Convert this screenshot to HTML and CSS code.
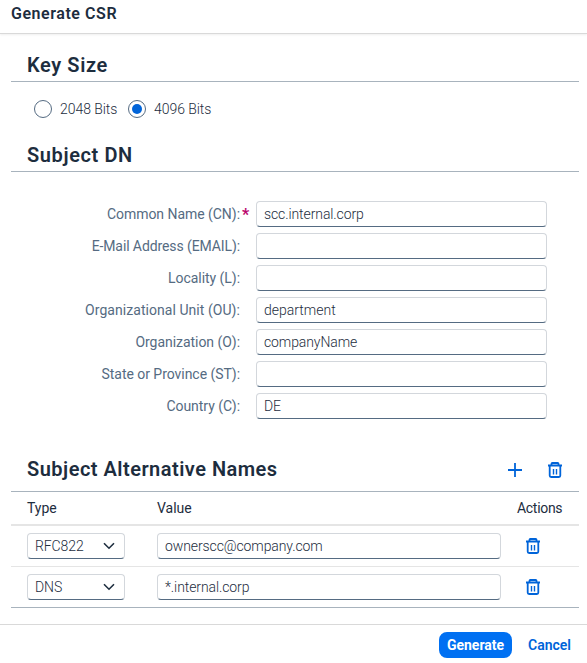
FILE: index.html
```html
<!DOCTYPE html>
<html lang="en">
<head>
<meta charset="utf-8">
<title>Generate CSR</title>
<link rel="stylesheet" href="styles.css">
</head>
<body>
<svg class="defs" width="0" height="0">
  <symbol id="trash" viewBox="0 0 16 16">
    <path d="M1 3.5H15M4.5 3V1.75Q4.5 1 5.3 1H10.7Q11.5 1 11.5 1.75V3M2.7 4V13.6Q2.7 15 4.1 15H11.9Q13.3 15 13.3 13.6V4" fill="none" stroke="currentColor" stroke-width="1.8"/>
    <path d="M6.5 7V12.6M9.5 7V12.6" fill="none" stroke="currentColor" stroke-width="1.4"/>
  </symbol>
  <symbol id="chevron" viewBox="0 0 12 8">
    <path d="M1 1.2L6 6.2L11 1.2" fill="none" stroke="currentColor" stroke-width="1.6"/>
  </symbol>
</svg>
<div class="dialog">
  <header class="titlebar"><span>Generate CSR</span></header>
  <main class="content">
    <h2 class="heading">Key Size</h2>
    <div class="radios">
      <span class="radio"></span><span class="radio-text">2048 Bits</span>
      <span class="radio checked"></span><span class="radio-text">4096 Bits</span>
    </div>
    <h2 class="heading second">Subject DN</h2>
    <div class="form">
      <label>Common Name (CN):<b>*</b></label><div class="input">scc.internal.corp</div>
      <label class="tight">E-Mail Address (EMAIL):</label><div class="input"></div>
      <label>Locality (L):</label><div class="input"></div>
      <label class="wide">Organizational Unit (OU):</label><div class="input wide">department</div>
      <label>Organization (O):</label><div class="input">companyName</div>
      <label>State or Province (ST):</label><div class="input"></div>
      <label>Country (C):</label><div class="input">DE</div>
    </div>
    <div class="toolbar">
      <h2>Subject Alternative Names</h2>
      <svg class="plus" viewBox="0 0 14 14"><path d="M7 0V14M0 7H14" stroke="currentColor" stroke-width="1.8"/></svg>
      <svg class="trash"><use href="#trash"/></svg>
    </div>
    <div class="row head"><span>Type</span><span>Value</span><span>Actions</span></div>
    <div class="row">
      <div class="input select">RFC822<svg><use href="#chevron"/></svg></div>
      <div class="input">ownerscc@company.com</div>
      <svg class="trash"><use href="#trash"/></svg>
    </div>
    <div class="row last">
      <div class="input select">DNS<svg><use href="#chevron"/></svg></div>
      <div class="input">*.internal.corp</div>
      <svg class="trash"><use href="#trash"/></svg>
    </div>
  </main>
  <footer class="footer"><button class="primary">Generate</button><button class="link">Cancel</button></footer>
</div>
</body>
</html>
```
FILE: styles.css
```css
* { box-sizing: border-box; }
body { margin: 0; background: #fff; color: #1d2d3e; font: 350 14px/20px Roboto, "Liberation Sans", sans-serif; }
.defs { position: absolute; }
.dialog { display: flex; flex-direction: column; height: 663px; overflow: hidden; }
.titlebar { height: 34px; padding: 4px 11px; border-bottom: 1px solid #d9d9d9; box-shadow: 0 1px 2px #0001; font-size: 16px; font-weight: 600; letter-spacing: .55px; }
.content { height: 590px; padding: 0 8px 0 11px; }
h2 { margin: 0; font-size: 20px; font-weight: 600; line-height: 24px; letter-spacing: .48px; }
.heading { height: 48px; padding: 19px 16px 0; border-bottom: 1px solid #a8b3bd; letter-spacing: .6px; }
.second { height: 36px; padding-top: 7px; }
.radios { display: flex; align-items: center; height: 54px; padding-left: 23px; }
.radio { display: flex; align-items: center; justify-content: center; width: 18px; height: 18px; border: 1px solid #556b82; border-radius: 50%; }
.radio.checked::after { content: ""; width: 10px; height: 10px; border-radius: 50%; background: #0064d9; }
.radio-text { width: 68px; margin-left: 8px; letter-spacing: -.05px; white-space: nowrap; }
.form { display: grid; grid-template-columns: 229px 291px; grid-auto-rows: 26px; row-gap: 6px; column-gap: 16px; padding-top: 29px; height: 276px; }
.form label { position: relative; text-align: right; line-height: 27px; color: #556b82; letter-spacing: -.04px; font-weight: 400; }
.form label.wide { letter-spacing: .05px; }
.form label.tight { letter-spacing: -.1px; }
.form b { position: absolute; left: 231px; top: 0; color: #ba066c; font-size: 16px; }
.input { height: 26px; padding: 0 7px; border: 1px solid #d3d7dc; border-bottom-color: #556b82; border-radius: 4px; line-height: 25px; color: #1d2d3e; letter-spacing: -.1px; }
.input.wide { letter-spacing: 0; }
.toolbar { display: flex; align-items: center; height: 44px; padding: 0 16px; border-bottom: 1px solid #a8b3bd; color: #0064d9; }
.toolbar h2 { flex: 1; color: #1d2d3e; padding-bottom: 2px; }
.plus { width: 14px; height: 14px; margin-right: 25px; }
.trash { width: 16px; height: 16px; color: #0064d9; }
.row { display: grid; grid-template-columns: 98px 344px 46px; column-gap: 32px; align-items: center; height: 41px; padding: 0 16px; border-bottom: 1px solid #e5e5e5; }
.row .trash { margin-left: -8px; }
.head { height: 34px; border-bottom-width: 2px; font-weight: 400; letter-spacing: 0; }
.head span:last-child { margin-left: -16px; letter-spacing: -.3px; }
.row:not(.head) { grid-template-columns: 98px 344px 16px; }
.last { border-color: #a8b3bd; }
.select { display: flex; justify-content: space-between; align-items: center; }
.select svg { width: 12px; height: 8px; margin-right: 2px; }
.footer { display: flex; justify-content: flex-end; height: 39px; padding: 7px 8px 0; border-top: 1px solid #d9d9d9; }
button { height: 26px; padding: 0; border: 0; border-radius: 8px; font: 700 14px Roboto, sans-serif; }
.primary { width: 73px; margin-right: 8px; background: #0070f2; color: #fff; }
.link { width: 59px; background: none; color: #0064d9; font-weight: 600; }
```
